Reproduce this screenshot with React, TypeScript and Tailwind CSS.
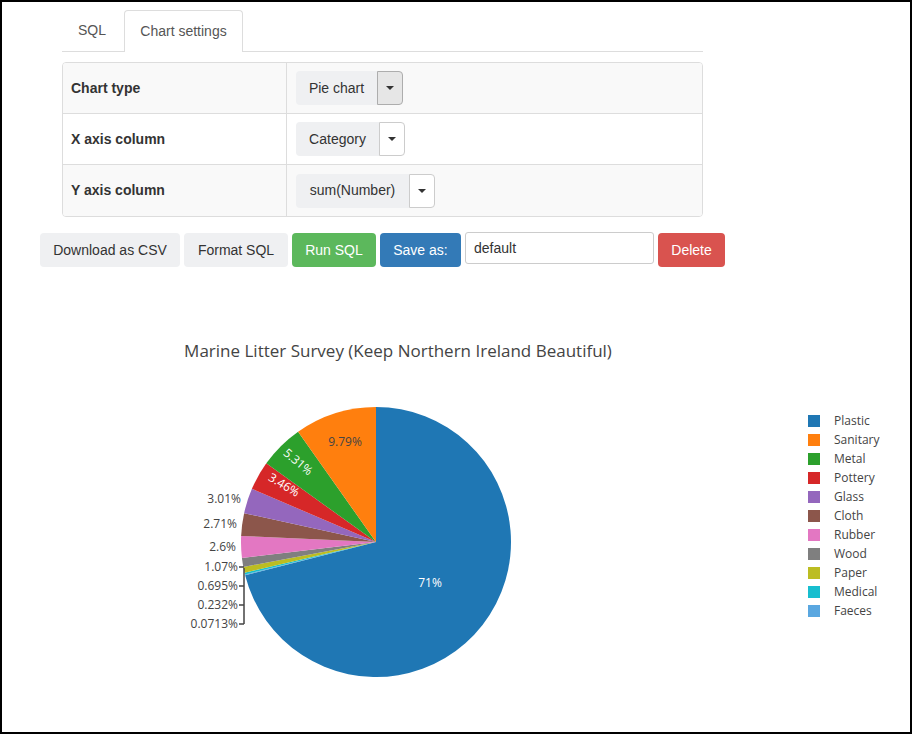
import { ReactNode } from "react";

const CX = 376;
const CY = 541;
const R = 135;

const slices = [
  { name: "Plastic", pct: 71.052, color: "#1f77b4" },
  { name: "Sanitary", pct: 9.79, color: "#ff7f0e" },
  { name: "Metal", pct: 5.31, color: "#2ca02c" },
  { name: "Pottery", pct: 3.46, color: "#d62728" },
  { name: "Glass", pct: 3.01, color: "#9467bd" },
  { name: "Cloth", pct: 2.71, color: "#8c564b" },
  { name: "Rubber", pct: 2.6, color: "#e377c2" },
  { name: "Wood", pct: 1.07, color: "#7f7f7f" },
  { name: "Paper", pct: 0.695, color: "#bcbd22" },
  { name: "Medical", pct: 0.232, color: "#17becf" },
  { name: "Faeces", pct: 0.0713, color: "#5aa7e0" },
];

function pt(deg: number) {
  const a = (deg * Math.PI) / 180;
  return [CX + R * Math.sin(a), CY - R * Math.cos(a)];
}

function arc(a0: number, a1: number) {
  const [x0, y0] = pt(a0);
  const [x1, y1] = pt(a1);
  const large = a1 - a0 > 180 ? 1 : 0;
  return `M${CX} ${CY} L${x0} ${y0} A${R} ${R} 0 ${large} 1 ${x1} ${y1} Z`;
}

// plastic clockwise from 12 o'clock, then the small ones from Faeces back up to Sanitary
function piePaths() {
  const total = slices.reduce((s, x) => s + x.pct, 0);
  const order = [slices[0], ...slices.slice(1).reverse()];
  let a = 0;
  return order.map((s) => {
    const span = (s.pct / total) * 360;
    const d = arc(a, a + span);
    a += span;
    return <path key={s.name} d={d} fill={s.color} />;
  });
}

function Caret() {
  return (
    <svg width="8" height="4" viewBox="0 0 8 4">
      <path d="M0 0 L8 0 L4 4 Z" fill="#333" />
    </svg>
  );
}

function SelectBox({ label, w, active }: { label: string; w: string; active?: boolean }) {
  return (
    <div className="flex h-[34px]">
      <div className={"flex items-center justify-center rounded-l-[4px] bg-[#eff0f2] text-[14px] text-[#333] " + w}>{label}</div>
      <div
        className={
          active
            ? "flex w-[26px] items-center justify-center rounded-r-[4px] border border-[#adadad] bg-[#e6e6e6]"
            : "flex w-[26px] items-center justify-center rounded-r-[4px] border border-[#ccc] bg-white"
        }
      >
        <Caret />
      </div>
    </div>
  );
}

function Row({ label, children, striped }: { label: string; children: ReactNode; striped?: boolean }) {
  return (
    <div className={striped ? "flex h-[51px] border-b border-[#ddd] bg-[#f9f9f9] last:border-b-0" : "flex h-[51px] border-b border-[#ddd] bg-white last:border-b-0"}>
      <div className="flex w-[224px] items-center border-r border-[#ddd] pl-[8px] text-[14px] font-bold text-[#333]">{label}</div>
      <div className="flex items-center pl-[9px]">{children}</div>
    </div>
  );
}

function Btn({ children, cls }: { children: ReactNode; cls: string }) {
  return (
    <button className={"flex h-[34px] items-center justify-center rounded-[4px] text-[14px] " + cls}>{children}</button>
  );
}

const labelFont = { fontFamily: '"Open Sans", verdana, arial, sans-serif' };

export default function App() {
  return (
    <div
      className="box-border h-[734px] w-[912px] overflow-hidden border-2 border-black bg-white"
      style={{ fontFamily: '"Liberation Sans", Arial, sans-serif' }}
    >
      <div className="ml-[60px] w-[641px] pt-[8px]">
        <div className="flex h-[42px] items-end border-b border-[#ddd]">
          <div className="mr-[2px] flex h-[41px] w-[60px] items-center justify-center text-[14px] text-[#555]">SQL</div>
          <div className="-mb-px flex h-[42px] w-[119px] items-center justify-center rounded-t-[4px] border border-b-0 border-[#ddd] bg-white text-[14px] text-[#555]">
            Chart settings
          </div>
        </div>
        <div className="mt-[10px] overflow-hidden rounded-[4px] border border-[#ddd]">
          <Row label="Chart type" striped>
            <SelectBox label="Pie chart" w="w-[81px]" active />
          </Row>
          <Row label="X axis column">
            <SelectBox label="Category" w="w-[83px]" />
          </Row>
          <Row label="Y axis column" striped>
            <SelectBox label="sum(Number)" w="w-[113px]" />
          </Row>
        </div>
      </div>

      <div className="ml-[38px] mt-[16px] flex items-start gap-[4px]">
        <Btn cls="w-[140px] bg-[#eff0f2] text-[#333]">Download as CSV</Btn>
        <Btn cls="w-[104px] bg-[#eff0f2] text-[#333]">Format SQL</Btn>
        <Btn cls="w-[84px] bg-[#5cb85c] text-white">Run SQL</Btn>
        <Btn cls="w-[81px] bg-[#337ab7] text-white">Save as:</Btn>
        <input
          readOnly
          value="default"
          className="-mt-px h-[32px] w-[189px] rounded-[3px] border border-[#ccc] px-[8px] text-[14px] text-[#333] outline-none"
        />
        <Btn cls="w-[67px] bg-[#d9534f] text-white">Delete</Btn>
      </div>

      <svg width="908" height="466" viewBox="2 266 908 466" className="block" style={labelFont}>
        <text x="398" y="356" textAnchor="middle" fontSize="17" fill="#444">
          Marine Litter Survey (Keep Northern Ireland Beautiful)
        </text>

        {piePaths()}

        <g fontSize="12">
          <text x="430" y="586" textAnchor="middle" fill="#fff">71%</text>
          <text x="345" y="445" textAnchor="middle" fill="#444">9.79%</text>
          <text x="0" y="4" textAnchor="middle" fill="#fff" transform="translate(298 461) rotate(40)">5.31%</text>
          <text x="0" y="4" textAnchor="middle" fill="#fff" transform="translate(284 484) rotate(31)">3.46%</text>

          <g fill="#444" textAnchor="end">
            <text x="241" y="502">3.01%</text>
            <text x="237" y="527">2.71%</text>
            <text x="236" y="550">2.6%</text>
            <text x="238" y="570">1.07%</text>
            <text x="238" y="589">0.695%</text>
            <text x="238" y="608">0.232%</text>
            <text x="238" y="627">0.0713%</text>
          </g>
        </g>
        <path
          d="M239 566 H244 M244 567 V623 M239 585 H244 M239 604 H244 M239 623 H244"
          stroke="#444"
          strokeWidth="1.5"
          fill="none"
        />

        <g fontSize="12" fill="#444">
          {slices.map((s, i) => (
            <g key={s.name}>
              <rect x="808" y={414 + i * 19} width="12" height="12" fill={s.color} />
              <text x="834" y={424 + i * 19}>{s.name}</text>
            </g>
          ))}
        </g>
      </svg>
    </div>
  );
}
